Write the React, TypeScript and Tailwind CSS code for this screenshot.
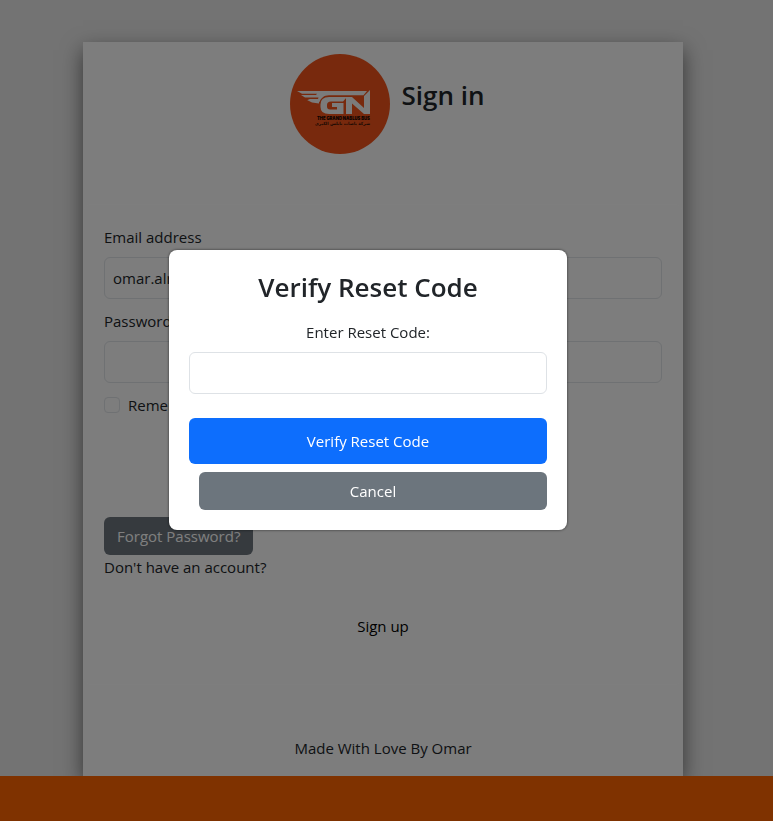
import React from "react";

function Logo() {
  return (
    <svg viewBox="0 0 100 100" className="size-[100px] shrink-0" role="img" aria-label="The Grand Nablus Bus">
      <circle cx="50" cy="50" r="50" fill="#f0531a" />
      <g fill="#f6f6f6">
        <path d="M7 37H77L73.500 41.200H39C34 41.200 31 44 29.500 48L21 46.500L17.500 45H28L28.500 43.500H15L11 41H26L27 39.800H12Z" />
        <path d="M17 46H29V49.500L22 48.500Z" />
        <path d="M39 43H57L53 47.500H41Q37 47.500 37 51V52.500Q37 55.500 40 55.500H47V53H42V49H53.500V60H39Q30.500 60 30.500 53V50.500Q30.500 43 39 43Z" />
        <path d="M56 60V43H62L74 54V42L80 36V60H74L62 49.500V60Z" />
      </g>
      <text x="27" y="65.500" fontSize="4.200" fontWeight="900" fontFamily="Inter, sans-serif" fill="#140500">
        THE GRAND NABLUS BUS
      </text>
      <text x="80" y="71" fontSize="4.200" fontWeight="700" textAnchor="start" direction="rtl" fontFamily="DejaVu Sans, sans-serif" fill="#321005">
        شركة باصات نابلس الكبرى
      </text>
    </svg>
  );
}

const field =
  "block h-[42px] w-full rounded-md border border-[#dee2e6] px-2 outline-none";

export default function App() {
  return (
    <div className="relative flex min-h-screen flex-col bg-[#e6e6e6] font-['Open_Sans','Noto_Sans',sans-serif] text-[15px] leading-6 text-[#212529]">
      <div className="flex flex-1 justify-center overflow-hidden pt-[42px] pr-[7px]">
        <main className="flex w-full max-w-[600px] flex-col bg-[#fafafa] shadow-[0_8px_20px_rgba(0,0,0,0.55)]">
          <header className="flex h-[162px] items-start justify-center gap-3 pt-3 pl-2">
            <Logo />
            <h1 className="pt-6 text-[26px] leading-[34px] font-semibold">Sign in</h1>
          </header>
          <form className="flex flex-col rounded-lg border border-[#fdfdfd] p-5" onSubmit={(e) => e.preventDefault()}>
            <label htmlFor="email" className="mb-2">Email address</label>
            <input id="email" type="text" defaultValue="omar.alr" className={field} />
            <label htmlFor="password" className="mt-[10px] mb-2">Password</label>
            <input id="password" type="password" className={field} />
            <div className="mt-[10px] flex items-center gap-2">
              <input id="remember" type="checkbox" className="size-4 appearance-none rounded border border-[#dee2e6]" />
              <label htmlFor="remember">Remember me</label>
            </div>
            <button type="button" className="mt-[100px] h-[38px] self-start rounded-md bg-[#6c757d] px-[13px] text-white">
              Forgot Password?
            </button>
            <p>Don't have an account?</p>
            <a href="#signup" className="mt-[35px] mb-[26px] self-center text-black">Sign up</a>
          </form>
          <p className="mt-auto pb-4 text-center">Made With Love By Omar</p>
        </main>
      </div>
      <footer className="relative h-[45px] bg-[#ff6400]" />

      <div className="fixed inset-0 flex items-center justify-center bg-black/50 pr-[37px] pb-[41px]">
        <section role="dialog" aria-modal="true" aria-labelledby="verify-title" className="flex w-full max-w-[398px] flex-col rounded-lg bg-white p-5 text-center shadow-[0_0_3px_rgba(0,0,0,0.6)]">
          <h2 id="verify-title" className="mb-2 text-[26px] leading-[34px] font-semibold">Verify Reset Code</h2>
          <form className="flex flex-col" onSubmit={(e) => e.preventDefault()}>
            <label htmlFor="code" className="mt-2 mb-2">Enter Reset Code:</label>
            <input id="code" type="text" className={field} />
            <button type="submit" className="mt-6 h-[46px] rounded-md bg-[#0d6efd] text-white">Verify Reset Code</button>
            <button type="button" className="mt-2 ml-[10px] h-[38px] rounded-md bg-[#6c757d] text-white">Cancel</button>
          </form>
        </section>
      </div>
    </div>
  );
}
